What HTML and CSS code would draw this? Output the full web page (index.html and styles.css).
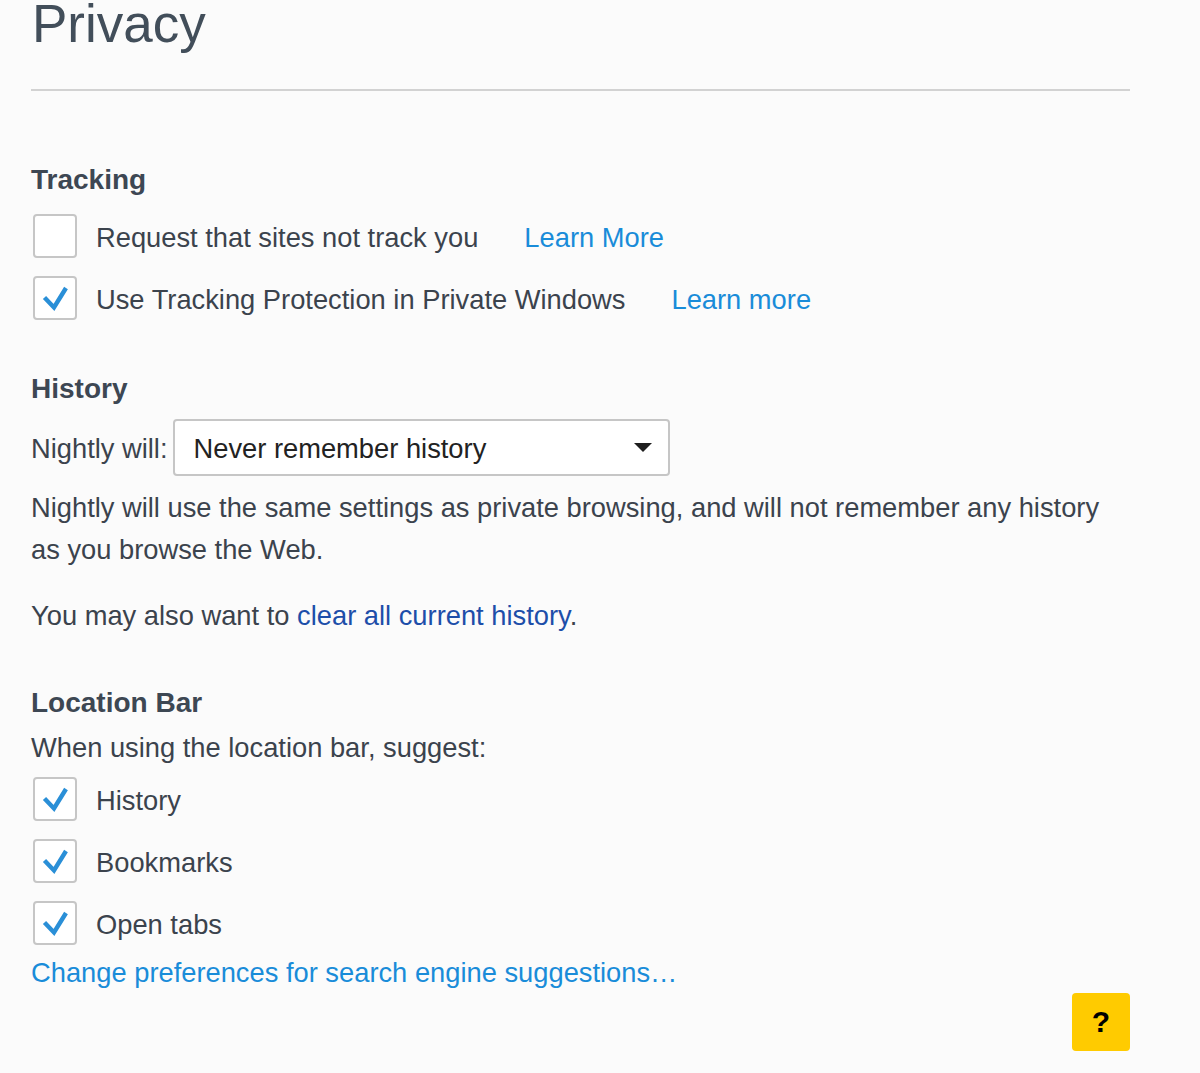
FILE: index.html
```html
<!DOCTYPE html>
<html lang="en">
<head>
<meta charset="utf-8">
<title>Privacy</title>
<link rel="stylesheet" href="styles.css">
</head>
<body>
<main class="page">
  <h1 class="title">Privacy</h1>
  <hr class="rule">

  <section class="group group-tracking">
    <h2 class="group-title">Tracking</h2>
    <div class="check-row">
      <span class="checkbox"></span>
      <span class="check-label">Request that sites not track you</span>
      <a class="learn" href="#">Learn More</a>
    </div>
    <div class="check-row">
      <span class="checkbox checked"><svg viewBox="0 0 44 44" class="tick"><path d="M11.5 21.5 L21 31.5 L33 12"/></svg></span>
      <span class="check-label">Use Tracking Protection in Private Windows</span>
      <a class="learn" href="#">Learn more</a>
    </div>
  </section>

  <section class="group group-history">
    <h2 class="group-title">History</h2>
    <div class="select-row">
      <span class="select-label">Nightly will:</span>
      <div class="select">
        <span class="select-value">Never remember history</span>
        <span class="select-arrow"></span>
      </div>
    </div>
    <p class="desc">Nightly will use the same settings as private browsing, and will not remember any history as you browse the Web.</p>
    <p class="desc desc-clear">You may also want to <a class="dark-link" href="#">clear all current history</a>.</p>
  </section>

  <section class="group group-location">
    <h2 class="group-title">Location Bar</h2>
    <p class="desc desc-suggest">When using the location bar, suggest:</p>
    <div class="check-row">
      <span class="checkbox checked"><svg viewBox="0 0 44 44" class="tick"><path d="M11.5 21.5 L21 31.5 L33 12"/></svg></span>
      <span class="check-label">History</span>
    </div>
    <div class="check-row">
      <span class="checkbox checked"><svg viewBox="0 0 44 44" class="tick"><path d="M11.5 21.5 L21 31.5 L33 12"/></svg></span>
      <span class="check-label">Bookmarks</span>
    </div>
    <div class="check-row">
      <span class="checkbox checked"><svg viewBox="0 0 44 44" class="tick"><path d="M11.5 21.5 L21 31.5 L33 12"/></svg></span>
      <span class="check-label">Open tabs</span>
    </div>
    <a class="search-link" href="#">Change preferences for search engine suggestions…</a>
  </section>

  <div class="help-row">
    <button class="help" type="button">?</button>
  </div>
</main>
</body>
</html>
```

FILE: styles.css
```css
html, body {
  margin: 0;
  padding: 0;
  background: #fbfbfb;
}

body {
  font-family: "Liberation Sans", Arial, sans-serif;
  color: #3b434d;
  font-size: 27.3px;
  overflow: hidden;
  height: 1073px;
}

.page {
  width: 1099px;
  padding-left: 31px;
}

.title {
  margin: -3px 0 0 0;
  font-size: 53px;
  font-weight: normal;
  line-height: 53px;
  color: #424e5a;
  padding-left: 1px;
}

.rule {
  margin: 39px 0 0 0;
  border: 0;
  height: 2px;
  background: #d2d2d2;
}

.group-title {
  margin: 0;
  font-size: 28px;
  font-weight: bold;
  line-height: 34px;
  color: #3d4753;
}

.group-tracking {
  margin-top: 72px;
}

.group-tracking .group-title {
  margin-bottom: 17px;
}

.check-row {
  display: flex;
  align-items: center;
  height: 44px;
  margin-bottom: 18px;
}

.check-row:last-of-type {
  margin-bottom: 0;
}

.checkbox {
  box-sizing: border-box;
  width: 44px;
  height: 44px;
  margin-left: 2px;
  border: 2px solid #c6c6c6;
  border-radius: 4px;
  background: #ffffff;
  display: block;
  flex: none;
}

.tick {
  display: block;
  width: 44px;
  height: 44px;
  margin: -2px 0 0 -2px;
  overflow: visible;
}

.tick path {
  fill: none;
  stroke: #2a8fd7;
  stroke-width: 4.4;
  stroke-linecap: butt;
  stroke-linejoin: miter;
}

.check-label {
  margin-left: 19px;
  line-height: 44px;
  padding-top: 3px;
}

.learn {
  margin-left: 46px;
  line-height: 44px;
  padding-top: 3px;
  color: #198cd9;
  text-decoration: none;
}

.group-history {
  margin-top: 52px;
}

.select-row {
  display: flex;
  align-items: center;
  margin-top: 13px;
}

.select-label {
  margin-right: 5px;
  padding-top: 2px;
}

.select {
  box-sizing: border-box;
  width: 497px;
  height: 57px;
  border: 2px solid #c6c6c6;
  border-radius: 4px;
  background: #ffffff;
  display: flex;
  align-items: center;
  justify-content: space-between;
  padding: 2px 16px 0 19px;
  color: #222222;
}

.select-arrow {
  width: 0;
  height: 0;
  border-left: 9.5px solid transparent;
  border-right: 9.5px solid transparent;
  border-top: 9px solid #1e1e1e;
  margin-top: -3px;
}

.desc {
  margin: 11px 0 0 0;
  line-height: 42px;
}

.desc-clear {
  margin-top: 24px;
}

.dark-link {
  color: #1d4ea9;
  text-decoration: none;
}

.group-location {
  margin-top: 49px;
}

.desc-suggest {
  margin-top: 7px;
  margin-bottom: 8px;
}

.search-link {
  display: block;
  margin-top: 7px;
  line-height: 42px;
  color: #198cd9;
  text-decoration: none;
}

.help-row {
  display: flex;
  justify-content: flex-end;
  margin-top: -1px;
}

.help {
  width: 58px;
  height: 58px;
  border: 0;
  border-radius: 4px;
  background: #ffcb00;
  color: #000000;
  font-family: "Liberation Sans", Arial, sans-serif;
  font-weight: bold;
  font-size: 30px;
  padding: 0;
  margin-right: 0;
}
```
